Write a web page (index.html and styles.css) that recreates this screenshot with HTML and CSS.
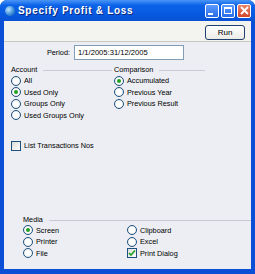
FILE: index.html
```html
<!DOCTYPE html>
<html lang="en">
<head>
    <meta charset="UTF-8">
    <title>Specify Profit &amp; Loss</title>
    <link rel="stylesheet" href="styles.css">
</head>
<body>
    <div class="window">
        <div class="titlebar">
            <span class="app-icon"></span>
            <span class="title">Specify Profit &amp; Loss</span>
            <div class="caption-buttons">
                <span class="cap-btn"><span class="min-glyph"></span></span>
                <span class="cap-btn"><span class="max-glyph"></span></span>
                <span class="cap-btn close">
                    <svg width="9" height="9" viewBox="0 0 9 9"><path d="M1 1 L8 8 M8 1 L1 8" stroke="#fff" stroke-width="1.8"/></svg>
                </span>
            </div>
        </div>
        <div class="client">
            <div class="toolbar">
                <button class="run-btn">Run</button>
            </div>
            <div class="form">
                <div class="period-row">
                    <label class="period-label">Period:</label>
                    <div class="field">1/1/2005:31/12/2005</div>
                </div>

                <div class="columns">
                    <div class="group account">
                        <div class="group-head"><span>Account</span><span class="rule"></span></div>
                        <div class="opt"><span class="radio"></span>All</div>
                        <div class="opt"><span class="radio on"></span>Used Only</div>
                        <div class="opt"><span class="radio"></span>Groups Only</div>
                        <div class="opt"><span class="radio"></span>Used Groups Only</div>
                    </div>
                    <div class="group comparison">
                        <div class="group-head"><span>Comparison</span><span class="rule"></span></div>
                        <div class="opt"><span class="radio on"></span>Accumulated</div>
                        <div class="opt"><span class="radio"></span>Previous Year</div>
                        <div class="opt"><span class="radio"></span>Previous Result</div>
                    </div>
                </div>

                <div class="opt check-row"><span class="check"></span>List Transactions Nos</div>

                <div class="media">
                    <div class="group-head"><span>Media</span><span class="rule"></span></div>
                    <div class="media-grid">
                        <div class="opt"><span class="radio on"></span>Screen</div>
                        <div class="opt"><span class="radio"></span>Clipboard</div>
                        <div class="opt"><span class="radio"></span>Printer</div>
                        <div class="opt"><span class="radio"></span>Excel</div>
                        <div class="opt"><span class="radio"></span>File</div>
                        <div class="opt"><span class="check on">
                            <svg width="8" height="8" viewBox="0 0 8 8"><path d="M1 4 L3 6 L7 1.5" fill="none" stroke="#21a121" stroke-width="1.6"/></svg>
                        </span>Print Dialog</div>
                    </div>
                </div>
            </div>
        </div>
    </div>
</body>
</html>
```

FILE: styles.css
```css
body {
    margin: 0;
    font-family: "Liberation Sans", Arial, sans-serif;
    font-size: 7.3px;
    color: #000;
    background: #fff;
}
.window {
    width: 255px;
    height: 274px;
    box-sizing: border-box;
    background: #0a4fd6;
    border-radius: 7px 7px 0 0;
    display: flex;
    flex-direction: column;
    padding: 0 4px 5px;
}
.titlebar {
    height: 21px;
    margin: 0 -4px;
    padding: 0 4px;
    border-radius: 7px 7px 0 0;
    background: linear-gradient(#4a96f8, #0c63e8 25%, #0758e0 70%, #0a52d4);
    display: flex;
    align-items: center;
}
.app-icon {
    width: 10px;
    height: 10px;
    border-radius: 50%;
    background: radial-gradient(circle at 35% 35%, #bfe3ff, #3a8fd8 55%, #1d4f9a);
    margin-left: 1px;
    margin-right: 3px;
}
.title {
    color: #fff;
    font-weight: bold;
    font-size: 10px;
    letter-spacing: 0.7px;
    text-shadow: 1px 1px 0 #0a2a80;
    flex: 1;
}
.caption-buttons {
    display: flex;
    gap: 2px;
}
.cap-btn {
    width: 14px;
    height: 14px;
    box-sizing: border-box;
    border: 1px solid #fff;
    border-radius: 2px;
    background: linear-gradient(#5b9bff, #2a6be8);
    display: flex;
    align-items: center;
    justify-content: center;
}
.cap-btn.close {
    background: linear-gradient(#e8866b, #d2452a);
}
.min-glyph {
    width: 5px;
    height: 2px;
    background: #fff;
    margin-top: 6px;
    margin-right: 3px;
}
.max-glyph {
    width: 8px;
    height: 7px;
    box-sizing: border-box;
    border: 1px solid #fff;
    border-top-width: 2px;
}
.client {
    flex: 1;
    display: flex;
    flex-direction: column;
    background: #eceef3;
}
.toolbar {
    height: 20px;
    background: #f3f3f0;
    border-bottom: 1px solid #c8c8c4;
    display: flex;
    justify-content: flex-end;
    align-items: center;
    padding-right: 6px;
}
.run-btn {
    width: 40px;
    height: 15px;
    padding: 0;
    font-family: inherit;
    font-size: 8px;
    border: 1px solid #1f3f6f;
    border-radius: 3px;
    background: linear-gradient(#ffffff, #ecebe6);
    margin-top: 3px;
}
.form {
    flex: 1;
    display: flex;
    flex-direction: column;
    padding: 3px 0 0 7px;
}
.period-row {
    display: flex;
    align-items: center;
}
.period-label {
    width: 59px;
    text-align: right;
    margin-right: 4px;
}
.field {
    width: 110px;
    height: 15px;
    box-sizing: border-box;
    border: 1px solid #7f9db9;
    background: #fff;
    padding: 2px 3px 0;
    font-size: 7.6px;
}
.columns {
    display: flex;
    margin-top: 4px;
}
.group {
    display: flex;
    flex-direction: column;
}
.account {
    width: 103px;
}
.comparison {
    width: 93px;
}
.group-head {
    display: flex;
    align-items: center;
    height: 11px;
}
.rule {
    flex: 1;
    height: 1px;
    background: #c8cbd2;
    margin: 2px 2px 0 6px;
}
.media .rule {
    margin-right: 0;
}
.opt {
    display: flex;
    align-items: center;
    height: 11.5px;
    white-space: nowrap;
}
.radio {
    width: 10px;
    height: 10px;
    box-sizing: border-box;
    border: 1px solid #1c5180;
    border-radius: 50%;
    background: radial-gradient(#fff 40%, #dcdcd6);
    margin-right: 3px;
    display: flex;
    align-items: center;
    justify-content: center;
}
.radio.on::after {
    content: "";
    width: 4px;
    height: 4px;
    border-radius: 50%;
    background: #21a121;
}
.check {
    width: 10px;
    height: 10px;
    box-sizing: border-box;
    border: 1px solid #1c5180;
    background: linear-gradient(135deg, #dcdcd6, #fff);
    margin-right: 3px;
    display: flex;
    align-items: center;
    justify-content: center;
}
.check-row {
    margin-top: 19px;
}
.media {
    margin-top: auto;
    margin-bottom: 10px;
    padding-left: 12px;
}
.media-grid {
    display: grid;
    grid-template-columns: 104px 1fr;
}
```
